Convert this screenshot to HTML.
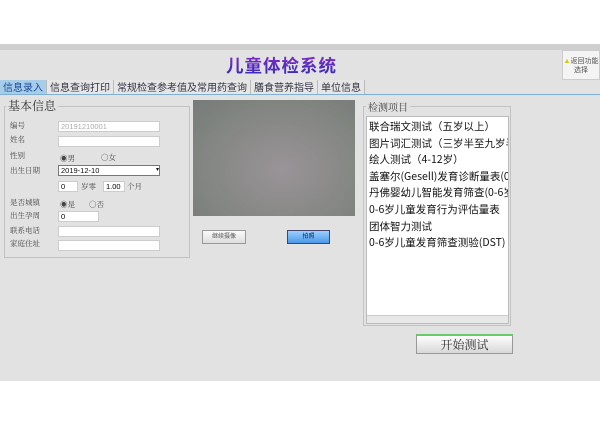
<!DOCTYPE html><html><head><meta charset="utf-8"><style>
body{margin:0;width:600px;height:424px;background:#fff;position:relative;overflow:hidden;font-family:"Liberation Sans","Noto Sans CJK SC",sans-serif}
.a{position:absolute}
.app{left:0;top:44px;width:600px;height:337px;background:#e2e2e2}
.strip{left:0;top:44px;width:600px;height:6px;background:#cfcfcf}
.title{left:226px;top:53px;font-size:17.5px;font-weight:bold;letter-spacing:1px;font-family:"Noto Sans CJK SC",sans-serif;background:linear-gradient(#8a2ac8,#2a2ab8);-webkit-background-clip:text;color:transparent}
.ret{left:562px;top:50px;width:38px;height:30px;background:#f4f4f4;border:1px solid #ccc;font-size:7px;color:#555;text-align:center;line-height:9px;padding-top:6px;box-sizing:border-box}
.tabs{left:0;top:80px;height:14px;font-size:10px;color:#334;display:flex;font-family:"Noto Sans CJK SC",sans-serif}
.tabs span{padding:0 3px;border-right:1px solid #bbb;line-height:14px;background:#e6e6e6}
.tabs span.on{background:#a8cde8;color:#1a4a9a}
.bl{left:0;top:94px;width:600px;height:1px;background:#7fb0d8}
.fr{border:1px solid #c2c2c2;box-sizing:border-box}
.lab{font-size:7.5px;color:#444;font-family:"Noto Serif CJK SC",serif}
.in{background:#fff;border:1px solid #ccc;box-sizing:border-box;height:11px;font-size:7.5px;line-height:9px;padding-left:2px}
.li{font-size:10.5px;color:#111;line-height:16.6px;white-space:nowrap;font-family:"Noto Sans CJK SC",sans-serif}
</style></head><body>
<div class="a app"></div><div class="a strip"></div>
<div class="a title">儿童体检系统</div>
<div class="a ret"><span style="color:#cc0">▲</span>返回功能<br>选择</div>
<div class="a tabs"><span class="on">信息录入</span><span>信息查询打印</span><span>常规检查参考值及常用药查询</span><span>膳食营养指导</span><span>单位信息</span></div>
<div class="a bl"></div>

<div class="a fr" style="left:4px;top:106px;width:186px;height:152px"></div>
<div class="a" style="left:6px;top:97px;font-size:12px;color:#333;background:#e2e2e2;padding:0 2px;font-family:'Noto Serif CJK SC',serif">基本信息</div>
<div class="a lab" style="left:10px;top:120px">编号</div><div class="a in" style="left:58px;top:121px;width:102px;color:#aaa">20191210001</div>
<div class="a lab" style="left:10px;top:134px">姓名</div><div class="a in" style="left:58px;top:136px;width:102px"></div>
<div class="a lab" style="left:10px;top:150px">性别</div>
<div class="a lab" style="left:60px;top:153px">◉男</div><div class="a lab" style="left:101px;top:152px">○女</div>
<div class="a lab" style="left:10px;top:165px">出生日期</div><div class="a in" style="left:58px;top:165px;width:102px;border-color:#777;color:#111">2019-12-10<span style="float:right;font-size:6px">▾</span></div>
<div class="a in" style="left:58px;top:181px;width:20px">0</div><div class="a lab" style="left:81px;top:181px">岁零</div>
<div class="a in" style="left:103px;top:181px;width:22px">1.00</div><div class="a lab" style="left:127px;top:181px">个月</div>
<div class="a lab" style="left:10px;top:197px">是否城镇</div>
<div class="a lab" style="left:60px;top:199px">◉是</div><div class="a lab" style="left:89px;top:199px">○否</div>
<div class="a lab" style="left:10px;top:210px">出生孕周</div><div class="a in" style="left:58px;top:211px;width:41px">0</div>
<div class="a lab" style="left:10px;top:225px">联系电话</div><div class="a in" style="left:58px;top:226px;width:102px"></div>
<div class="a lab" style="left:10px;top:238px">家庭住址</div><div class="a in" style="left:58px;top:240px;width:102px"></div>

<div class="a" style="left:193px;top:100px;width:162px;height:116px;background:radial-gradient(ellipse at 55% 60%,#9a9498,#80847f 70%,#767a7a)"></div>
<div class="a" style="left:202px;top:230px;width:44px;height:14px;background:linear-gradient(#fafafa,#ddd);border:1px solid #999;box-sizing:border-box;font-size:6px;color:#555;text-align:center;line-height:12px">继续摄像</div>
<div class="a" style="left:287px;top:230px;width:43px;height:14px;background:linear-gradient(#9cd0ff,#4a98e8);border:1px solid #446;box-sizing:border-box;font-size:6px;color:#124;text-align:center;line-height:12px">拍照</div>

<div class="a fr" style="left:363px;top:106px;width:148px;height:220px"></div>
<div class="a" style="left:366px;top:99px;font-size:10px;color:#444;background:#e2e2e2;padding:0 2px;font-family:'Noto Serif CJK SC',serif">检测项目</div>
<div class="a" style="left:366px;top:116px;width:143px;height:208px;background:#fff;border:1px solid #bbb;box-sizing:border-box;overflow:hidden;padding:2px 0 0 2px">
<div class="li">联合瑞文测试（五岁以上）</div><div class="li">图片词汇测试（三岁半至九岁半）</div><div class="li">绘人测试（4-12岁）</div><div class="li">盖塞尔(Gesell)发育诊断量表(0-6岁)</div><div class="li">丹佛婴幼儿智能发育筛查(0-6岁)</div><div class="li">0-6岁儿童发育行为评估量表</div><div class="li">团体智力测试</div><div class="li">0-6岁儿童发育筛查测验(DST)</div>
<div class="a" style="left:0;bottom:0;width:141px;height:7px;background:#e8e8e8;border-top:1px solid #ccc"></div>
</div>
<div class="a" style="left:416px;top:334px;width:97px;height:20px;background:linear-gradient(#fdfdfd,#d8d8d8);border:1px solid #999;border-top:2px solid #6c6;box-sizing:border-box;font-size:12px;color:#333;text-align:center;line-height:17px;font-family:'Noto Serif CJK SC',serif">开始测试</div>
</body></html>
